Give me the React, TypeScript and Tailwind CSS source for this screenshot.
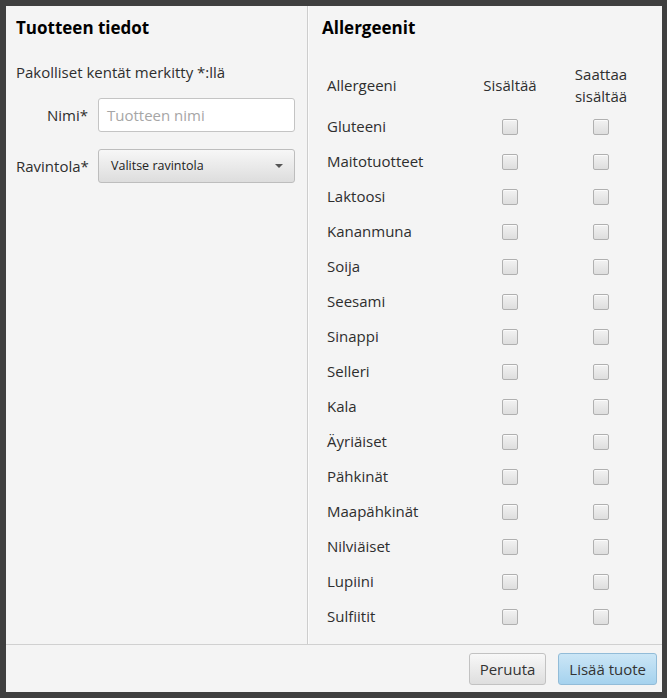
import React from "react";

const allergens = [
  "Gluteeni",
  "Maitotuotteet",
  "Laktoosi",
  "Kananmuna",
  "Soija",
  "Seesami",
  "Sinappi",
  "Selleri",
  "Kala",
  "Äyriäiset",
  "Pähkinät",
  "Maapähkinät",
  "Nilviäiset",
  "Lupiini",
  "Sulfiitit",
];

function CheckBox() {
  return (
    <div className="w-4 h-4 rounded-[2px] border border-[#b0b0b0] bg-gradient-to-b from-[#f2f2f2] to-[#dedede] shadow-[inset_0_1px_0_rgba(255,255,255,0.7)]" />
  );
}

export default function App() {
  return (
    <div
      className="w-[667px] h-[698px] bg-[#3f3f3f] pt-[6px] pl-[6px] pr-[5px] pb-[6px] text-[#2e2e2e]"
      style={{ fontFamily: '"Open Sans", "Noto Sans", sans-serif' }}
    >
      <div className="w-full h-full bg-[#f4f4f4] flex flex-col">
        <div className="flex flex-1 min-h-0">
          {/* Tuotteen tiedot */}
          <div className="w-[301px] pt-[11px] pl-[10px] pr-[12px]">
            <h1 className="text-[17px] leading-[22px] font-bold text-black">Tuotteen tiedot</h1>
            <p className="mt-[23px] text-[15px] leading-[20px]">Pakolliset kentät merkitty *:llä</p>
            <div className="mt-[16px] grid grid-cols-[72px_1fr] gap-x-[10px] gap-y-[17px] items-center">
              <label className="text-right text-[15px]">Nimi*</label>
              <div className="h-[34px] rounded-[3px] border border-[#c4c4c4] bg-white flex items-center px-[8px] text-[15px] text-[#a6a6a6]">
                Tuotteen nimi
              </div>
              <label className="text-right text-[15px]">Ravintola*</label>
              <div className="h-[34px] rounded-[3px] border border-[#bdbdbd] bg-gradient-to-b from-[#f7f7f7] to-[#dddddd] flex items-center justify-between pl-[12px] pr-[11px] text-[12.5px] text-[#222]">
                <span>Valitse ravintola</span>
                <svg width="8" height="4" viewBox="0 0 8 4">
                  <path d="M0 0 L8 0 L4 4 Z" fill="#555" />
                </svg>
              </div>
            </div>
          </div>

          <div className="w-px bg-[#cdcdcd]" />
          <div className="w-px bg-[#fbfbfb]" />

          {/* Allergeenit */}
          <div className="flex-1 pt-[11px] pl-[13px]">
            <h2 className="text-[17px] leading-[22px] font-bold text-black">Allergeenit</h2>
            <div className="mt-[22px] ml-[5px] grid grid-cols-[140px_86px_96px]">
              <div className="h-[48px] flex items-center text-[15px]">Allergeeni</div>
              <div className="h-[48px] flex items-center justify-center text-[15px]">Sisältää</div>
              <div className="h-[48px] flex flex-col items-center justify-center text-[15px] leading-[22px]">
                <span>Saattaa</span>
                <span>sisältää</span>
              </div>
              {allergens.map((a) => (
                <React.Fragment key={a}>
                  <div className="h-[35px] flex items-center text-[15px]">{a}</div>
                  <div className="h-[35px] flex items-center justify-center">
                    <CheckBox />
                  </div>
                  <div className="h-[35px] flex items-center justify-center">
                    <CheckBox />
                  </div>
                </React.Fragment>
              ))}
            </div>
          </div>
        </div>

        {/* Footer */}
        <div className="h-[48px] border-t border-[#d0d0d0] flex items-start justify-end gap-[12px] pt-[8px] pr-[5px]">
          <button className="h-[32px] px-[10px] rounded-[3px] border border-[#c2c2c2] bg-gradient-to-b from-[#f8f8f8] to-[#dedede] text-[15px] text-[#333]">
            Peruuta
          </button>
          <button className="h-[32px] px-[10px] rounded-[3px] border border-[#92bcd8] bg-gradient-to-b from-[#cbe6f6] to-[#a5d2ee] text-[15px] text-[#333]">
            Lisää tuote
          </button>
        </div>
      </div>
    </div>
  );
}
